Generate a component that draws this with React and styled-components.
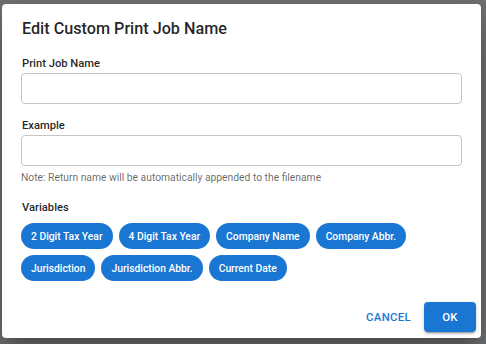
import React, { useState } from 'react';
import styled, { createGlobalStyle } from 'styled-components';

const GlobalStyle = createGlobalStyle`
  html, body {
    margin: 0;
    padding: 0;
    background: #707274;
  }
  * {
    box-sizing: border-box;
  }
`;

const Backdrop = styled.div`
  width: 486px;
  height: 344px;
  padding: 4px 5px 6px 2px;
  background: #707274;
  font-family: Roboto, "Liberation Sans", sans-serif;
  overflow: hidden;
`;

const Dialog = styled.div`
  width: 479px;
  height: 334px;
  background: #fff;
  border-radius: 4px;
  display: flex;
  flex-direction: column;
  box-shadow: 0 11px 15px -7px rgba(0, 0, 0, 0.2), 0 24px 38px 3px rgba(0, 0, 0, 0.14),
    0 9px 46px 8px rgba(0, 0, 0, 0.12);
`;

const Title = styled.h2`
  margin: 0;
  padding: 13px 20px 0;
  font-size: 16.2px;
  line-height: 24px;
  font-weight: 500;
  color: rgba(0, 0, 0, 0.87);
`;

const Content = styled.div`
  padding: 0 19px;
  display: flex;
  flex-direction: column;
`;

const Label = styled.label`
  display: block;
  margin-top: ${(p) => p.gap}px;
  margin-bottom: ${(p) => (p.tight ? 1 : 0)}px;
  padding-left: 1px;
  font-size: 11.2px;
  line-height: 16px;
  font-weight: 500;
  color: rgba(0, 0, 0, 0.87);
`;

const TextInput = styled.input`
  width: 100%;
  height: 31px;
  border: 1px solid #c4c4c4;
  border-radius: 4px;
  padding: 0 10px;
  font-family: inherit;
  font-size: 12px;
  color: rgba(0, 0, 0, 0.87);
  outline: none;
`;

const Note = styled.p`
  margin: 5px 0 0;
  font-size: 10.3px;
  line-height: 14px;
  color: rgba(0, 0, 0, 0.6);
`;

const ChipList = styled.div`
  margin-top: 7px;
  display: flex;
  flex-wrap: wrap;
  gap: 6px;
`;

const Chip = styled.button`
  height: 26px;
  padding: 0 10px;
  border: none;
  border-radius: 13px;
  background: #1976d2;
  color: #fff;
  font-family: inherit;
  font-size: 10.3px;
  font-weight: 500;
  cursor: pointer;
`;

const Actions = styled.div`
  margin-top: auto;
  padding: 0 5px 6px;
  display: flex;
  justify-content: flex-end;
  align-items: center;
  gap: 7px;
`;

const ActionButton = styled.button`
  height: 30px;
  min-width: ${(p) => (p.primary ? 52 : 0)}px;
  padding: 0 6px;
  border: none;
  border-radius: 4px;
  background: ${(p) => (p.primary ? '#1976d2' : 'transparent')};
  color: ${(p) => (p.primary ? '#fff' : '#1976d2')};
  box-shadow: ${(p) =>
    p.primary
      ? '0 3px 1px -2px rgba(0,0,0,0.2), 0 2px 2px 0 rgba(0,0,0,0.14), 0 1px 5px 0 rgba(0,0,0,0.12)'
      : 'none'};
  font-family: inherit;
  font-size: 11.4px;
  font-weight: 500;
  letter-spacing: 0.3px;
  text-transform: uppercase;
  cursor: pointer;
`;

const variables = [
  '2 Digit Tax Year',
  '4 Digit Tax Year',
  'Company Name',
  'Company Abbr.',
  'Jurisdiction',
  'Jurisdiction Abbr.',
  'Current Date',
];

export default function App() {
  const [name, setName] = useState('');

  return (
    <Backdrop>
      <GlobalStyle />
      <Dialog role="dialog">
        <Title>Edit Custom Print Job Name</Title>
        <Content>
          <Label gap={15} tight>Print Job Name</Label>
          <TextInput value={name} onChange={(e) => setName(e.target.value)} />
          <Label gap={14} tight>Example</Label>
          <TextInput readOnly value="" />
          <Note>Note: Return name will be automatically appended to the filename</Note>
          <Label gap={15}>Variables</Label>
          <ChipList>
            {variables.map((v) => (
              <Chip key={v} onClick={() => setName(name + `{${v}}`)}>
                {v}
              </Chip>
            ))}
          </ChipList>
        </Content>
        <Actions>
          <ActionButton>Cancel</ActionButton>
          <ActionButton primary>OK</ActionButton>
        </Actions>
      </Dialog>
    </Backdrop>
  );
}
